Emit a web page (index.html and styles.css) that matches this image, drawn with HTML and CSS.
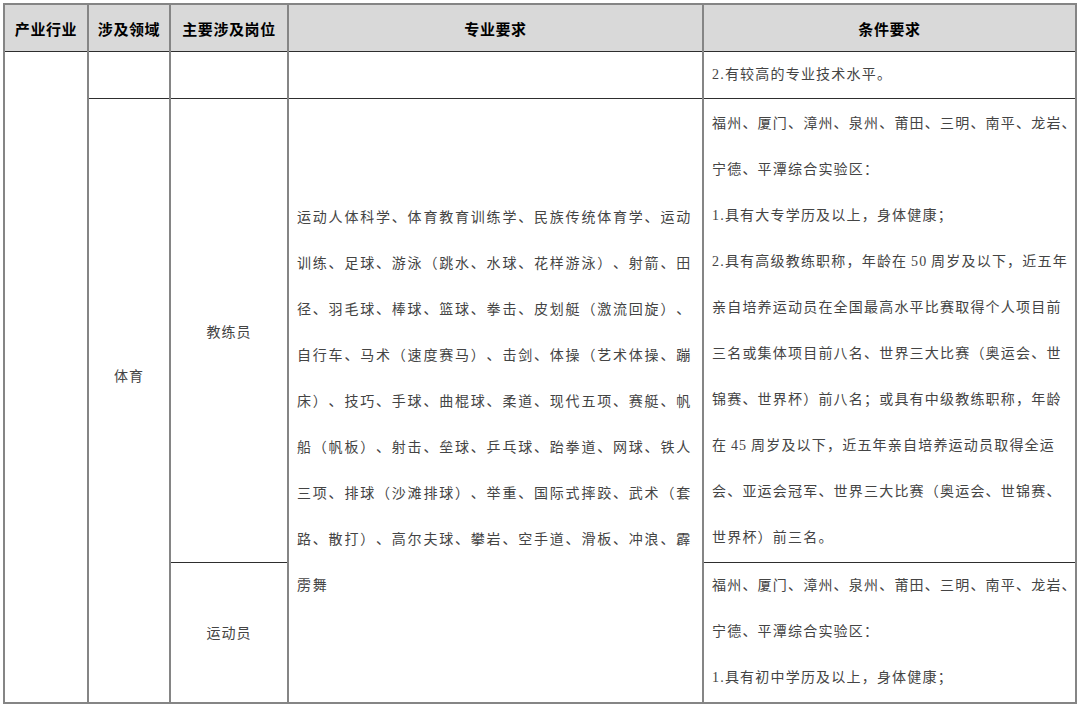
FILE: index.html
```html
<!DOCTYPE html>
<html lang="zh-CN">
<head>
<meta charset="utf-8">
<title>体育 岗位专业与条件要求</title>
<link rel="stylesheet" href="styles.css">
</head>
<body>
<div class="page">
  <table class="req">
    <colgroup>
      <col class="c-ind">
      <col class="c-field">
      <col class="c-post">
      <col class="c-major">
      <col class="c-cond">
    </colgroup>
    <thead>
      <tr class="head">
        <th>产业行业</th>
        <th>涉及领域</th>
        <th>主要涉及岗位</th>
        <th>专业要求</th>
        <th>条件要求</th>
      </tr>
    </thead>
    <tbody>
      <tr class="r-tail">
        <td rowspan="3"></td>
        <td></td>
        <td></td>
        <td></td>
        <td class="cond"><p>2.有较高的专业技术水平。</p></td>
      </tr>
      <tr class="r-coach">
        <td rowspan="2" class="field">体育</td>
        <td class="post">教练员</td>
        <td rowspan="2" class="major">运动人体科学、体育教育训练学、民族传统体育学、运动训练、足球、游泳（跳水、水球、花样游泳）、射箭、田径、羽毛球、棒球、篮球、拳击、皮划艇（激流回旋）、自行车、马术（速度赛马）、击剑、体操（艺术体操、蹦床）、技巧、手球、曲棍球、柔道、现代五项、赛艇、帆船（帆板）、射击、垒球、乒乓球、跆拳道、网球、铁人三项、排球（沙滩排球）、举重、国际式摔跤、武术（套路、散打）、高尔夫球、攀岩、空手道、滑板、冲浪、霹雳舞</td>
        <td class="cond">
          <p>福州、厦门、漳州、泉州、莆田、三明、南平、龙岩、<br>宁德、平潭综合实验区：</p>
          <p>1.具有大专学历及以上，身体健康；</p>
          <p>2.具有高级教练职称，年龄在 50 周岁及以下，近五年<br>亲自培养运动员在全国最高水平比赛取得个人项目前<br>三名或集体项目前八名、世界三大比赛（奥运会、世<br>锦赛、世界杯）前八名；或具有中级教练职称，年龄<br>在 45 周岁及以下，近五年亲自培养运动员取得全运<br>会、亚运会冠军、世界三大比赛（奥运会、世锦赛、<br>世界杯）前三名。</p>
        </td>
      </tr>
      <tr class="r-athlete">
        <td class="post">运动员</td>
        <td class="cond">
          <p>福州、厦门、漳州、泉州、莆田、三明、南平、龙岩、<br>宁德、平潭综合实验区：</p>
          <p>1.具有初中学历及以上，身体健康；</p>
        </td>
      </tr>
    </tbody>
  </table>
</div>
</body>
</html>
```

FILE: styles.css
```css
html,
body {
  margin: 0;
  padding: 0;
  background: #ffffff;
}

.page {
  padding: 3px 0 0 3px;
}

.req {
  border-collapse: collapse;
  table-layout: fixed;
  width: 1072px;
  border: 2px solid #858585;
  font-family: "Liberation Serif", "Noto Sans CJK SC", serif;
  font-size: 14px;
  color: #444444;
}

.c-ind { width: 84px; }
.c-field { width: 82px; }
.c-post { width: 118px; }
.c-major { width: 415px; }
.c-cond { width: 373px; }

.req th,
.req td {
  border-left: 2px solid #858585;
  border-right: 2px solid #858585;
  border-top: 1px solid #2e2e2e;
  border-bottom: 1px solid #2e2e2e;
  padding: 0;
  vertical-align: middle;
  text-align: center;
}

.req .head th {
  height: 46px;
  background: #d9d9d9;
  font-family: "Noto Sans CJK SC", sans-serif;
  font-weight: 700;
  font-size: 15px;
  letter-spacing: 0.6px;
  color: #000000;
}

.r-tail { height: 46px; }
.r-coach { height: 464px; }
.r-athlete { height: 140px; }

.req .field,
.req .post {
  font-family: "Noto Sans CJK SC", sans-serif;
  letter-spacing: 1px;
}

.req .field {
  padding-bottom: 50px;
}

.req .major {
  text-align: left;
  padding: 0 4px 0 8px;
  font-family: "Noto Sans CJK SC", sans-serif;
  line-height: 46px;
  letter-spacing: 1.8px;
  text-spacing-trim: space-all;
}

.req .cond {
  text-align: left;
  padding: 0 0 0 8px;
  line-height: 46px;
  letter-spacing: 1.2px;
  word-spacing: -1px;
  white-space: nowrap;
  text-spacing-trim: space-all;
}

.cond p {
  margin: 0;
}

.req .r-athlete .cond {
  vertical-align: top;
}
```
